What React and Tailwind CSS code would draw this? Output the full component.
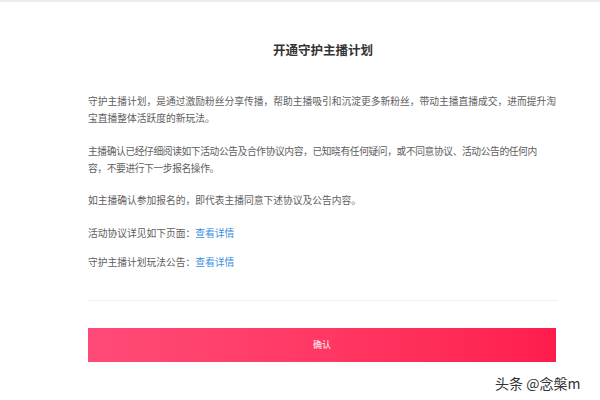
import React from 'react';

const font = { fontFamily: '"Noto Sans CJK SC", "Noto Sans", sans-serif' };

const App = () => {
  return (
    <div
      className="relative w-[600px] h-[400px] overflow-hidden bg-white border-t-2 border-[#ececec]"
      style={font}
    >
      <div className="ml-[88px] w-[470px] flex flex-col">
        <h1 className="mt-[38px] text-center text-[12.5px] leading-[20px] font-bold text-[#333]">
          开通守护主播计划
        </h1>

        {/* explicit lines, the reference wraps at these points */}
        <div className="mt-[33px] text-[9.75px] leading-[17px] text-[#5e5e5e] whitespace-nowrap">
          <p>守护主播计划，是通过激励粉丝分享传播，帮助主播吸引和沉淀更多新粉丝，带动主播直播成交，进而提升淘</p>
          <p>宝直播整体活跃度的新玩法。</p>
        </div>

        <div className="mt-[16px] text-[9.75px] leading-[17px] text-[#5e5e5e] whitespace-nowrap tracking-[-0.4px]">
          <p>主播确认已经仔细阅读如下活动公告及合作协议内容，已知晓有任何疑问，或不同意协议、活动公告的任何内</p>
          <p>容，不要进行下一步报名操作。</p>
        </div>

        <p className="mt-[15px] text-[9.75px] leading-[17px] text-[#5e5e5e]">
          如主播确认参加报名的，即代表主播同意下述协议及公告内容。
        </p>

        <p className="mt-[16px] text-[9.75px] leading-[17px] text-[#5e5e5e]">
          活动协议详见如下页面：<a className="text-[#3d8fe0] cursor-pointer">查看详情</a>
        </p>

        <p className="mt-[12px] text-[9.75px] leading-[17px] text-[#5e5e5e]">
          守护主播计划玩法公告：<a className="text-[#3d8fe0] cursor-pointer">查看详情</a>
        </p>

        <div className="mt-[29px] h-px bg-[#f1f1f1]" />

        <button className="mt-[27px] h-[34px] w-[468px] bg-gradient-to-r from-[#ff4a78] to-[#ff1c4c] text-white text-[9px] flex items-center justify-center">
          确认
        </button>
      </div>

      <div className="absolute left-[495px] top-[371px] text-[14px] leading-[20px] text-[#333] whitespace-nowrap [text-shadow:0_0_2px_#fff]">
        头条 @念槃m
      </div>
    </div>
  );
};

export default App;
